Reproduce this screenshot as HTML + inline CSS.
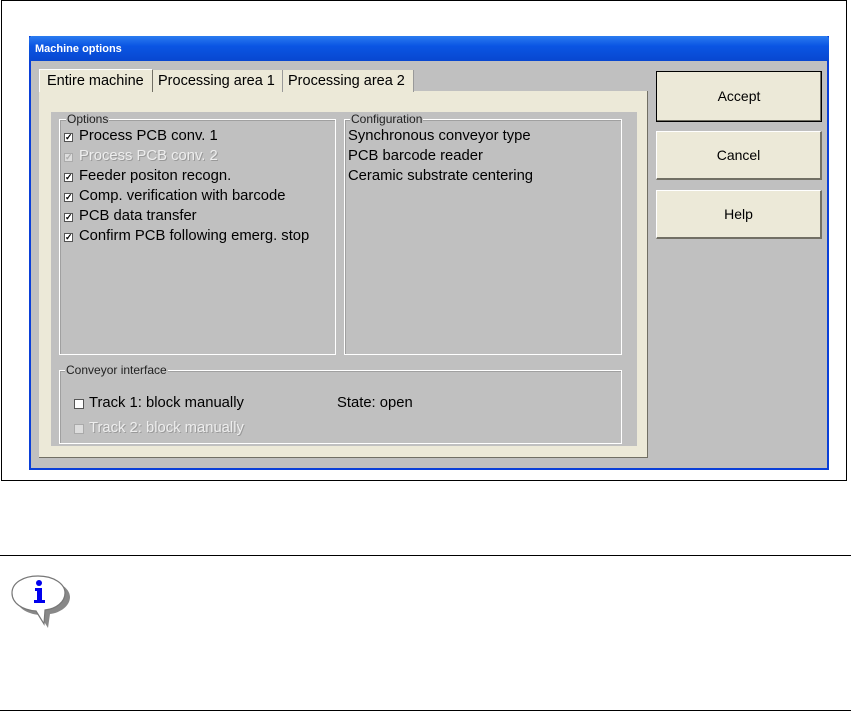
<!DOCTYPE html>
<html><head><style>
body{margin:0;width:851px;height:713px;background:#fff;position:relative;overflow:hidden;font-family:"Liberation Sans",Arial,sans-serif}
.a{position:absolute}
.frame{left:1px;top:0;width:846px;height:481px;border:1px solid #000;box-sizing:border-box}
.win{left:29px;top:36px;width:800px;height:434px;background:#c0c0c0;border:2px solid #0a3fd8;border-top:none;box-sizing:border-box}
.title{left:29px;top:36px;width:800px;height:25px;background:linear-gradient(#2b7cf0,#0a55e3 40%,#0847d0);color:#fff;font-weight:bold;font-size:11px;line-height:27px;padding-left:6px;box-sizing:border-box;border-radius:3px 3px 0 0}
.tabp{left:39px;top:91px;width:609px;height:367px;background:#ece9d8;border-right:1px solid #716f64;border-bottom:1px solid #716f64;box-sizing:border-box}
.tab{top:70px;height:22px;font-size:14.5px;line-height:22px;background:#ece9d8;padding:0 5px;box-sizing:border-box;border-right:1px solid #999;white-space:nowrap}
.gray{left:51px;top:112px;width:586px;height:334px;background:#c0c0c0}
.gb{border:1px solid #fff;box-shadow:inset 1px 1px 0 #a0a0a0;box-sizing:border-box}
.lg{font-size:12px;color:#222;background:#c0c0c0;padding:0 1px;line-height:12px}
.t{font-size:14.8px;color:#000;white-space:nowrap}
.dis{color:#eee;text-shadow:1px 1px 0 #999}
.cb{width:9px;height:9px;border:1px solid #555;background:#fff;box-sizing:border-box;font-size:9px;line-height:7px;text-align:center;font-weight:bold}
.btn{left:656px;width:166px;background:#ece9d8;border:1px solid #fff;border-right:2px solid #716f64;border-bottom:2px solid #716f64;box-sizing:border-box;text-align:center;font-size:14px}
</style></head><body>
<div class="a frame"></div>
<div class="a win"></div>
<div class="a title">Machine options</div>
<div class="a tabp"></div>
<div class="a tab" style="left:39px;top:69px;height:23px;border:1px solid #fff;border-bottom:none;border-right:1px solid #716f64;width:114px;padding-left:7px">Entire machine</div>
<div class="a tab" style="left:153px;width:130px">Processing area 1</div>
<div class="a tab" style="left:283px;width:131px">Processing area 2</div>
<div class="a gray"></div>
<div class="a gb" style="left:59px;top:119px;width:277px;height:236px"></div>
<div class="a gb" style="left:344px;top:119px;width:278px;height:236px"></div>
<div class="a gb" style="left:59px;top:370px;width:563px;height:74px"></div>
<div class="a lg" style="left:66px;top:113px">Options</div>
<div class="a lg" style="left:350px;top:113px">Configuration</div>
<div class="a lg" style="left:65px;top:364px">Conveyor interface</div>

<div class="a cb" style="left:64px;top:133px">✓</div><div class="a t" style="left:79px;top:128px">Process PCB conv. 1</div>
<div class="a cb" style="left:64px;top:153px;border-color:#aaa;color:#aaa;background:#ddd">✓</div><div class="a t dis" style="left:79px;top:148px">Process PCB conv. 2</div>
<div class="a cb" style="left:64px;top:173px">✓</div><div class="a t" style="left:79px;top:168px">Feeder positon recogn.</div>
<div class="a cb" style="left:64px;top:193px">✓</div><div class="a t" style="left:79px;top:188px">Comp. verification with barcode</div>
<div class="a cb" style="left:64px;top:213px">✓</div><div class="a t" style="left:79px;top:208px">PCB data transfer</div>
<div class="a cb" style="left:64px;top:233px">✓</div><div class="a t" style="left:79px;top:228px">Confirm PCB following emerg. stop</div>

<div class="a t" style="left:348px;top:128px">Synchronous conveyor type</div>
<div class="a t" style="left:348px;top:148px">PCB barcode reader</div>
<div class="a t" style="left:348px;top:168px">Ceramic substrate centering</div>

<div class="a cb" style="left:74px;top:399px;width:10px;height:10px"></div><div class="a t" style="left:89px;top:395px">Track 1: block manually</div>
<div class="a t" style="left:337px;top:395px">State: open</div>
<div class="a cb" style="left:74px;top:424px;width:10px;height:10px;border-color:#aaa;background:#ddd"></div><div class="a t dis" style="left:89px;top:420px">Track 2: block manually</div>

<div class="a btn" style="top:71px;height:51px;line-height:49px;border:1px solid #000;box-shadow:inset -1px -1px 0 #716f64">Accept</div>
<div class="a btn" style="top:131px;height:49px;line-height:47px">Cancel</div>
<div class="a btn" style="top:190px;height:49px;line-height:47px">Help</div>

<div class="a" style="left:0;top:555px;width:851px;height:1px;background:#000"></div>
<div class="a" style="left:0;top:710px;width:851px;height:1px;background:#000"></div>
<svg class="a" style="left:8px;top:572px" width="64" height="62">
<path d="M32 6 C48 6 60 14 60 23 C60 32 50 39 40 40 L38 54 L30 41 C16 40 6 33 6 23 C6 13 18 6 32 6Z" fill="#888" transform="translate(2,2)"/>
<path d="M30 4 C46 4 57 12 57 21 C57 30 48 37 37 38 L36 52 L28 39 C14 38 4 31 4 21 C4 11 15 4 30 4Z" fill="#fff" stroke="#777" stroke-width="1.2"/>
<circle cx="31" cy="11" r="3" fill="#0000ee"/>
<path d="M27 16 H34 V28 H37 V31 H26 V28 H29 V19 H27Z" fill="#0000ee"/>
</svg>
</body></html>
